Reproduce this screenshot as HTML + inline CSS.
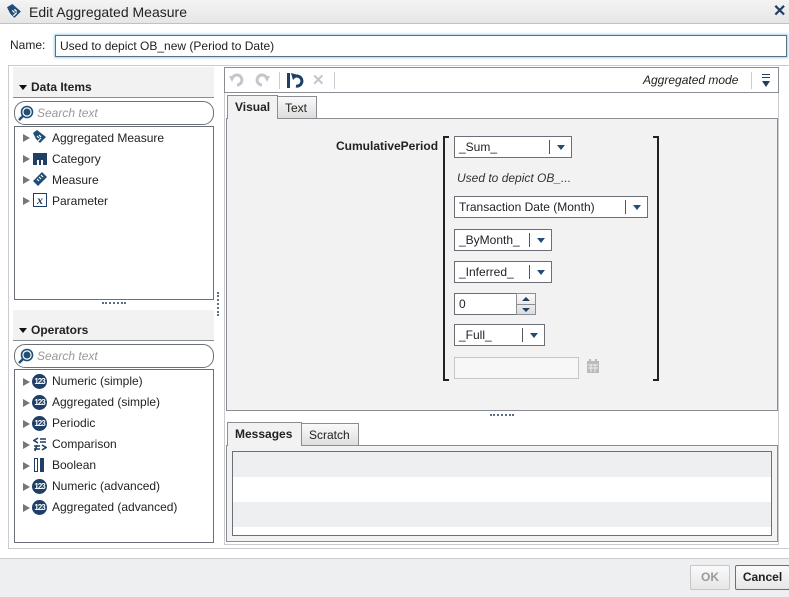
<!DOCTYPE html>
<html><head><style>
*{box-sizing:border-box;margin:0;padding:0}
body{width:789px;height:597px;background:#fff;font-family:"Liberation Sans",Arial,sans-serif;font-size:12px;color:#222;position:relative;overflow:hidden}
.a{position:absolute}
.sel{position:absolute;border:1px solid #6b6f78;background:#fff;height:22px;padding:3px 0 0 4px;font-size:12px}
.sel .ar{position:absolute;right:0;top:3px;width:22px;height:14px;border-left:1px solid #555}
.sel .ar:after{content:"";position:absolute;left:7px;top:5px;border-left:4px solid transparent;border-right:4px solid transparent;border-top:5px solid #1f4e79}
.tri{position:absolute;left:8px;width:0;height:0;border-top:4px solid transparent;border-bottom:4px solid transparent;border-left:7px solid #777}
.row{position:absolute;left:0;height:20px;width:100%}
.row span{position:absolute;left:37px;top:2px;font-size:12px}
.ic{position:absolute;left:18px;top:1px;width:14px;height:14px}
.n123{position:absolute;left:17px;top:2px;width:15px;height:15px;border-radius:50%;background:#1f3f66;color:#fff;font-size:8px;font-weight:bold;text-align:center;line-height:15px;letter-spacing:-1px}
.srch{position:absolute;border:1px solid #6b6f78;border-radius:11px;background:#fff;height:24px}
.srch i{position:absolute;left:22px;top:4px;color:#999;font-size:12px}
.tab{position:absolute;border:1px solid #8a8d94;border-bottom:none;font-size:12px;padding:4px 0 0 7px}
</style></head><body>
<div class="a" style="left:0;top:0;width:789px;height:24px;background:linear-gradient(#f4f4f4,#e6e6e6);border-bottom:1px solid #bfc1c5"></div>
<svg class="a" style="left:7px;top:4px" width="15" height="15" viewBox="0 0 14 14"><path d="M0 3 L5 0 L13 7 L7 13 L3 9Z" fill="#1f4e79"/><path d="M5 6l2 2M7 5l2 2M9 8l-3 3" stroke="#fff" stroke-width="1.2"/></svg>
<div class="a" style="left:29px;top:4px;font-size:14px;color:#222">Edit Aggregated Measure</div>
<div class="a" style="left:773px;top:1px;font-size:16px;font-weight:bold;color:#1f3f66">✕</div>
<div class="a" style="left:10px;top:38px;font-size:12px">Name:</div>
<div class="a" style="left:55px;top:35px;width:732px;height:22px;border:1px solid #5a6f86;box-shadow:0 0 2px 1px #a9d3ee;padding:3px 0 0 4px;font-size:12px">Used to depict OB_new (Period to Date)</div>
<div class="a" style="left:8px;top:65px;width:781px;height:484px;border:1px solid #c9cbcf;border-right:none"></div>
<div class="a" style="left:13px;top:67px;width:201px;height:31px;background:#f2f2f2;border-bottom:1px solid #8a8d94"></div>
<div class="a" style="left:19px;top:85px;border-left:4px solid transparent;border-right:4px solid transparent;border-top:5px solid #111"></div>
<div class="a" style="left:31px;top:80px;font-weight:bold">Data Items</div>
<div class="srch" style="left:14px;top:101px;width:200px"><svg class="a" style="left:3px;top:3px" width="16" height="17" viewBox="0 0 16 17"><circle cx="9" cy="7" r="5.5" fill="#fff" stroke="#1f4e79" stroke-width="1.6"/><circle cx="9" cy="7" r="3.5" fill="#1f4e79"/><path d="M5 11 L1 15" stroke="#1f4e79" stroke-width="2.5"/></svg><i>Search text</i></div>
<div class="a" style="left:14px;top:126px;width:200px;height:174px;border:1px solid #6b6f78;background:#fff">
 <div class="row" style="top:2px"><div class="tri" style="top:5px"></div><svg class="ic" viewBox="0 0 14 14"><path d="M0 3 L4 0 L13 7 L7 13 L3 9Z" fill="#1f4e79"/><path d="M4 6l2 2M6 5l2 2M8 8l-3 3" stroke="#fff" stroke-width="1.2"/></svg><span>Aggregated Measure</span></div>
 <div class="row" style="top:23px"><div class="tri" style="top:5px"></div><svg class="ic" viewBox="0 0 14 14"><path d="M0 2h14v12h-4v-5h-2v5h-2v-5h-2v5h-4z" fill="#1f3f66"/></svg><span>Category</span></div>
 <div class="row" style="top:44px"><div class="tri" style="top:5px"></div><svg class="ic" viewBox="0 0 14 14"><path d="M0 9 L9 0 L14 5 L5 14Z" fill="#1f4e79"/><path d="M4 7l2 2M6 5l2 2M8 3l2 2" stroke="#fff" stroke-width="1.2"/></svg><span>Measure</span></div>
 <div class="row" style="top:65px"><div class="tri" style="top:5px"></div><div class="ic" style="border:1px solid #1f3f66;font:italic bold 12px 'Liberation Serif',serif;text-align:center;line-height:12px;color:#1f3f66">x</div><span>Parameter</span></div>
</div>
<div class="a" style="left:102px;top:302px;width:24px;border-top:2px dotted #5a6f86"></div>
<div class="a" style="left:217px;top:292px;height:24px;border-left:2px dotted #5a6f86"></div>
<div class="a" style="left:13px;top:310px;width:201px;height:31px;background:#f2f2f2;border-bottom:1px solid #8a8d94"></div>
<div class="a" style="left:19px;top:328px;border-left:4px solid transparent;border-right:4px solid transparent;border-top:5px solid #111"></div>
<div class="a" style="left:31px;top:323px;font-weight:bold">Operators</div>
<div class="srch" style="left:14px;top:344px;width:200px"><svg class="a" style="left:3px;top:3px" width="16" height="17" viewBox="0 0 16 17"><circle cx="9" cy="7" r="5.5" fill="#fff" stroke="#1f4e79" stroke-width="1.6"/><circle cx="9" cy="7" r="3.5" fill="#1f4e79"/><path d="M5 11 L1 15" stroke="#1f4e79" stroke-width="2.5"/></svg><i>Search text</i></div>
<div class="a" style="left:14px;top:369px;width:200px;height:174px;border:1px solid #6b6f78;background:#fff">
 <div class="row" style="top:2px"><div class="tri" style="top:6px"></div><div class="n123">123</div><span>Numeric (simple)</span></div>
 <div class="row" style="top:23px"><div class="tri" style="top:6px"></div><div class="n123">123</div><span>Aggregated (simple)</span></div>
 <div class="row" style="top:44px"><div class="tri" style="top:6px"></div><div class="n123">123</div><span>Periodic</span></div>
 <div class="row" style="top:65px"><div class="tri" style="top:6px"></div><svg class="a" style="left:18px;top:2px" width="14" height="15" viewBox="0 0 14 15"><path d="M5 1 L1 3.5 L5 6 M7 2h6M7 5h6 M1 9h6M1 12h6 M4 8l-2 6 M9 8l4 2.5 L9 13" stroke="#1f3f66" stroke-width="1.6" fill="none"/></svg><span>Comparison</span></div>
 <div class="row" style="top:86px"><div class="tri" style="top:6px"></div><div class="a" style="left:19px;top:2px;width:4px;height:14px;border:1px solid #1f3f66"></div><div class="a" style="left:25px;top:2px;width:4px;height:14px;background:#1f3f66"></div><span>Boolean</span></div>
 <div class="row" style="top:107px"><div class="tri" style="top:6px"></div><div class="n123">123</div><span>Numeric (advanced)</span></div>
 <div class="row" style="top:128px"><div class="tri" style="top:6px"></div><div class="n123">123</div><span>Aggregated (advanced)</span></div>
</div>
<div class="a" style="left:224px;top:67px;width:555px;height:26px;border:1px solid #8a8d94;background:#fff"></div>
<svg class="a" style="left:229px;top:72px" width="16" height="15" viewBox="0 0 16 15"><path d="M3 7 A5 5 0 1 1 8 13" stroke="#c4c6ca" stroke-width="3" fill="none"/><path d="M0 4 L6 4 L3 10Z" fill="#c4c6ca"/></svg>
<svg class="a" style="left:254px;top:72px" width="16" height="15" viewBox="0 0 16 15"><path d="M13 7 A5 5 0 1 0 8 13" stroke="#c4c6ca" stroke-width="3" fill="none"/><path d="M16 4 L10 4 L13 10Z" fill="#c4c6ca"/></svg>
<div class="a" style="left:279px;top:72px;height:17px;border-left:1px solid #ccc"></div>
<div class="a" style="left:287px;top:73px;width:3px;height:15px;background:#1f3f66"></div>
<svg class="a" style="left:291px;top:72px" width="14" height="16" viewBox="0 0 14 16"><path d="M3 5 A5 5 0 1 1 5 14" stroke="#1f3f66" stroke-width="3" fill="none"/><path d="M0 1 L7 3 L2 8Z" fill="#1f3f66"/></svg>
<div class="a" style="left:312px;top:71px;font-size:15px;color:#c4c6ca;font-weight:bold">✕</div>
<div class="a" style="left:334px;top:72px;height:17px;border-left:1px solid #ccc"></div>
<div class="a" style="left:643px;top:73px;font-style:italic">Aggregated mode</div>
<div class="a" style="left:751px;top:72px;height:17px;border-left:1px solid #ccc"></div>
<div class="a" style="left:762px;top:74px;width:8px;border-top:1.5px solid #1f3f66"></div>
<div class="a" style="left:762px;top:77px;width:8px;border-top:1.5px solid #1f3f66"></div>
<div class="a" style="left:762px;top:81px;border-left:4px solid transparent;border-right:4px solid transparent;border-top:6px solid #1f3f66"></div>
<div class="a" style="left:224px;top:93px;width:555px;height:452px;border:1px solid #c9cbcf;border-top:none"></div>
<div class="tab" style="left:227px;top:95px;width:51px;height:24px;background:#f2f2f2;font-weight:bold;z-index:2">Visual</div>
<div class="tab" style="left:277px;top:96px;width:40px;height:22px;background:linear-gradient(#fafafa,#ddd)">Text</div>
<div class="a" style="left:226px;top:118px;width:552px;height:293px;border:1px solid #8a8d94;background:#f2f2f2"></div>
<div class="a" style="left:336px;top:139px;font-weight:bold">CumulativePeriod</div>
<div class="a" style="left:443px;top:136px;width:6px;height:245px;border:2px solid #222;border-right:none"></div>
<div class="a" style="left:653px;top:136px;width:6px;height:245px;border:2px solid #222;border-left:none"></div>
<div class="sel" style="left:454px;top:136px;width:118px">_Sum_<div class="ar"></div></div>
<div class="a" style="left:457px;top:171px;font-style:italic;color:#333">Used to depict OB_...</div>
<div class="sel" style="left:454px;top:196px;width:194px">Transaction Date (Month)<div class="ar"></div></div>
<div class="sel" style="left:454px;top:229px;width:98px">_ByMonth_<div class="ar"></div></div>
<div class="sel" style="left:454px;top:261px;width:98px">_Inferred_<div class="ar"></div></div>
<div class="sel" style="left:454px;top:293px;width:63px">0</div>
<div class="a" style="left:516px;top:293px;width:20px;height:22px;border:1px solid #8a8d94;background:linear-gradient(#fafafa,#ddd)"></div>
<div class="a" style="left:516px;top:304px;width:20px;border-top:1px solid #8a8d94"></div>
<div class="a" style="left:522px;top:297px;border-left:4px solid transparent;border-right:4px solid transparent;border-bottom:4px solid #1f3f66"></div>
<div class="a" style="left:522px;top:308px;border-left:4px solid transparent;border-right:4px solid transparent;border-top:4px solid #1f3f66"></div>
<div class="sel" style="left:454px;top:324px;width:91px">_Full_<div class="ar"></div></div>
<div class="a" style="left:454px;top:357px;width:125px;height:22px;border:1px solid #c4c6ca;background:#f7f7f7"></div>
<svg class="a" style="left:587px;top:359px" width="12" height="14" viewBox="0 0 12 14"><rect x="0" y="2" width="12" height="12" fill="#bbb"/><rect x="2" y="0" width="2" height="3" fill="#bbb"/><rect x="8" y="0" width="2" height="3" fill="#bbb"/><path d="M1 6h10M1 9h10M4 5v8M8 5v8" stroke="#eee"/></svg>
<div class="a" style="left:490px;top:414px;width:24px;border-top:2px dotted #5a6f86"></div>
<div class="tab" style="left:227px;top:422px;width:75px;height:24px;background:#f2f2f2;font-weight:bold;z-index:2">Messages</div>
<div class="tab" style="left:301px;top:423px;width:58px;height:23px;background:linear-gradient(#fafafa,#ddd)">Scratch</div>
<div class="a" style="left:226px;top:445px;width:552px;height:97px;border:1px solid #8a8d94;background:#f2f2f2"></div>
<div class="a" style="left:232px;top:451px;width:540px;height:85px;border:1px solid #6b6f78;background:#fff">
 <div class="a" style="left:0;top:0;width:100%;height:25px;background:#eeeff1"></div>
 <div class="a" style="left:0;top:50px;width:100%;height:25px;background:#eeeff1"></div>
</div>
<div class="a" style="left:0;top:558px;width:789px;height:39px;background:#eeeff1;border-top:1px solid #c9cbcf"></div>
<div class="a" style="left:690px;top:565px;width:40px;height:25px;border:1px solid #c4c6ca;border-radius:2px;background:linear-gradient(#fafafa,#e6e6e6);color:#999;font-weight:bold;text-align:center;line-height:23px">OK</div>
<div class="a" style="left:735px;top:565px;width:55px;height:25px;border:1px solid #6b6f78;border-radius:2px;background:linear-gradient(#fafafa,#e6e6e6);font-weight:bold;text-align:center;line-height:23px">Cancel</div>
</body></html>
